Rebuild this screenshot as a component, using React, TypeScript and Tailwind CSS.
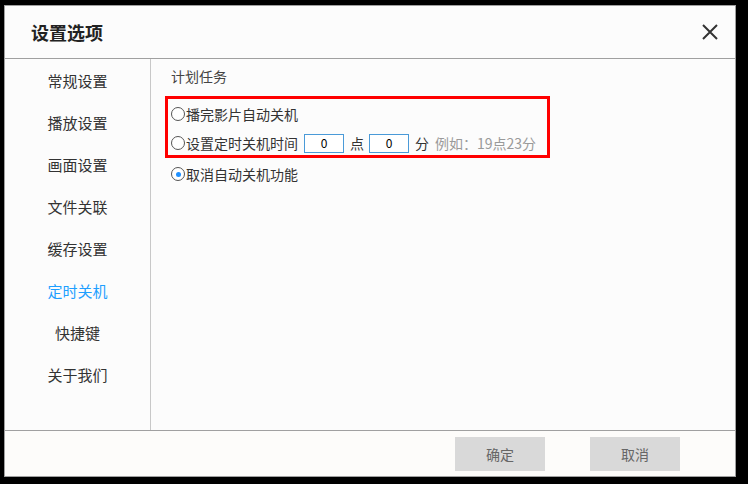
import { useState } from "react";

const menu = ["常规设置", "播放设置", "画面设置", "文件关联", "缓存设置", "定时关机", "快捷键", "关于我们"];

const Radio = ({ checked }: { checked?: boolean }) => (
    <span className="w-[14px] h-[14px] rounded-full border border-[#555] bg-white flex items-center justify-center shrink-0">
        {checked && <span className="w-[5px] h-[5px] rounded-full bg-[#1e90ff]" />}
    </span>
);

export default function App() {
    const [active] = useState("定时关机");
    return (
        <div className="w-[748px] h-[484px] bg-black pt-[5px] pl-[4px] text-[14px] text-[#333]" style={{ fontFamily: '"Noto Sans CJK SC", "Noto Sans", sans-serif' }}>
            <div className="w-[732px] h-[472px] border border-[#a0a0a0] bg-[#fcfcfc] flex flex-col">
                {/* header */}
                <div className="h-[53px] border-b border-[#a0a0a0] flex items-center justify-between pl-[26px] pr-[16px] shrink-0">
                    <span className="text-[18px] font-bold text-[#222]">设置选项</span>
                    <svg width="18" height="18" viewBox="0 0 18 18" className="text-[#333]">
                        <path d="M2 2 L16 16 M16 2 L2 16" stroke="currentColor" strokeWidth="2" />
                    </svg>
                </div>
                {/* body */}
                <div className="flex h-[372px] border-b border-[#a0a0a0] shrink-0">
                    <div className="w-[146px] border-r border-[#c8c8c8] pt-px flex flex-col text-[15px]">
                        {menu.map((m) => (
                            <div key={m} className={`h-[42px] flex items-center justify-center ${m === active ? "text-[#1e9fff]" : "text-[#333]"}`}>
                                {m}
                            </div>
                        ))}
                    </div>
                    <div className="flex-1 pl-[14px] pt-[7px]">
                        <div className="pl-[6px] h-[20px] leading-[20px] text-[#444]">计划任务</div>
                        <div className="mt-[10px] w-[385px] border-[3px] border-[#f00] pt-[4px] pl-[3px] pb-[1px] flex flex-col gap-[7px]">
                            <div className="h-[22px] flex items-center">
                                <Radio />
                                <span className="ml-px">播完影片自动关机</span>
                            </div>
                            <div className="h-[22px] flex items-center">
                                <Radio />
                                <span className="ml-px">设置定时关机时间</span>
                                <span className="ml-[6px] w-[40px] h-[19px] border border-[#4a9ad8] bg-white flex items-center justify-center text-[12px] text-black">0</span>
                                <span className="ml-[6px]">点</span>
                                <span className="ml-[5px] w-[40px] h-[19px] border border-[#4a9ad8] bg-white flex items-center justify-center text-[12px] text-black">0</span>
                                <span className="ml-[6px]">分</span>
                                <span className="ml-[6px] text-[#9a9a9a]">例如：19点23分</span>
                            </div>
                        </div>
                        <div className="mt-[5px] pl-[6px] h-[22px] flex items-center">
                            <Radio checked />
                            <span className="ml-px">取消自动关机功能</span>
                        </div>
                    </div>
                </div>
                {/* footer */}
                <div className="flex-1 bg-[#fdfcfa] flex justify-end items-start pt-[6px] pr-[55px] gap-[45px]">
                    <button className="w-[90px] h-[34px] bg-[#d9d9d9] text-[#666]">确定</button>
                    <button className="w-[90px] h-[34px] bg-[#d9d9d9] text-[#666]">取消</button>
                </div>
            </div>
        </div>
    );
}
